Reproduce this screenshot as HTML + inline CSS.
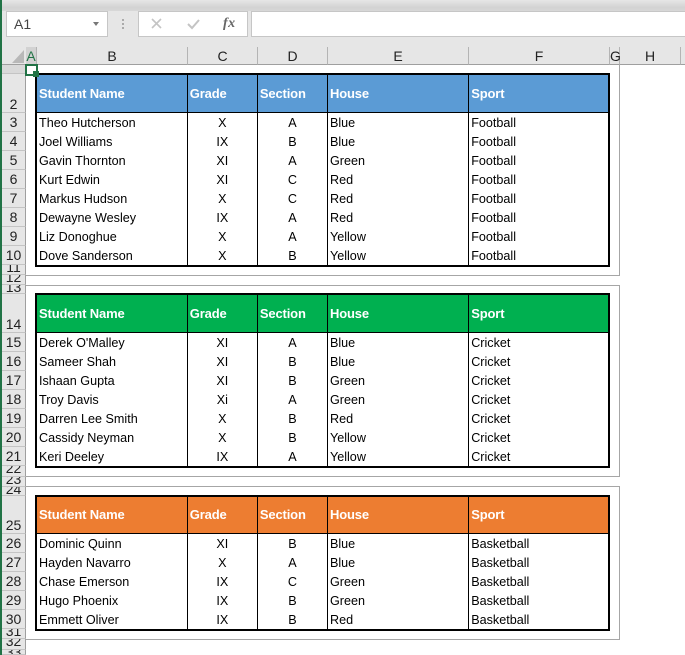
<!DOCTYPE html>
<html><head><meta charset="utf-8">
<style>
html,body{margin:0;padding:0;background:#fff}
#p{position:relative;width:685px;height:655px;overflow:hidden;background:#fff;font-family:"Liberation Sans",sans-serif;font-size:12.6px;color:#000}
.a{position:absolute}
.top{left:0;top:0;width:685px;height:47px;background:#e6e6e6}
.grad{left:0;top:0;width:685px;height:11px;background:linear-gradient(#e6e6e6,#d2d2d2 70%,#d8d8d8)}
.box{background:#fff;border:1px solid #c6c6c6;box-sizing:border-box}
.ch{top:47px;height:18px;background:#e6e6e6;border-bottom:1px solid #9f9f9f;box-sizing:border-box;text-align:center;line-height:19px;font-size:14px;color:#222;border-right:1px solid #b4b4b4}
.rh{left:2px;width:24px;background:#e6e6e6;border-bottom:1px solid #c4c4c4;border-right:1px solid #9f9f9f;box-sizing:border-box;overflow:hidden;text-align:center;font-size:14px;color:#222}
.rh span{position:absolute;left:0;right:0;bottom:-1px;line-height:19px}
.rh.t span{bottom:-2px}
.rh.s span{bottom:auto;top:0;margin-top:-7px}
.g{background:#a6a6a6}
table{position:absolute;left:35px;width:575px;border-collapse:collapse;table-layout:fixed;border:2px solid #000;box-sizing:border-box;background:#fff}
col.b{width:151px}col.c,col.d{width:70px}col.e{width:141px}col.f{width:140px}
th,td{padding:0 0 0 2px;height:19px;line-height:19px;border-left:1px solid #000;white-space:nowrap;overflow:hidden;text-align:left;font-weight:normal;box-sizing:border-box}
td{padding-top:2px;line-height:17px}
th{height:38px;color:#fff;font-weight:bold;font-size:13px;letter-spacing:-.15px;border-bottom:1px solid #000;padding-top:1px}
td.m{text-align:center;padding:2px 0 0}
.bl th{background:#5b9bd5}.gr th{background:#00b050}.or th{background:#ed7d31;height:37px;padding-top:0;padding-bottom:1px}
</style></head><body><div id="p">
<div class="a top"></div><div class="a grad"></div>
<div class="a" style="left:0;top:0;width:2px;height:655px;background:#217346;z-index:9"></div>
<div class="a box" style="left:6px;top:11px;width:102px;height:26px;line-height:24px;padding-left:7px;font-size:14px;color:#444">A1</div>
<div class="a" style="left:93px;top:22px;border-left:3.5px solid transparent;border-right:3.5px solid transparent;border-top:4px solid #777"></div>
<div class="a" style="left:122px;top:19px;width:2px;height:2px;background:#aaa;box-shadow:0 4px #aaa,0 8px #aaa"></div>
<div class="a box" style="left:138px;top:11px;width:110px;height:26px"></div>
<svg class="a" style="left:150px;top:17px" width="20" height="14"><path d="M2 2l9 9M11 2l-9 9" stroke="#c4c4c4" stroke-width="1.6" fill="none"/></svg>
<svg class="a" style="left:186px;top:17px" width="16" height="14"><path d="M2 7l4 4 7-8" stroke="#c4c4c4" stroke-width="2" fill="none"/></svg>
<div class="a" style="left:223px;top:16px;font:italic bold 14px 'Liberation Serif',serif;color:#666;letter-spacing:.5px">fx</div>
<div class="a box" style="left:251px;top:11px;width:440px;height:26px"></div>

<div class="a" style="left:2px;top:47px;width:24px;height:18px;background:#e6e6e6;border-bottom:1px solid #9f9f9f;box-sizing:border-box"></div>
<svg class="a" style="left:11px;top:49px" width="14" height="15"><path d="M13 1v13H1z" fill="#b8b8b8"/></svg>
<div class="a ch" style="left:26px;width:11px;background:#d2d2d2;color:#217346">A</div>
<div class="a ch" style="left:37px;width:151px">B</div>
<div class="a ch" style="left:188px;width:70px">C</div>
<div class="a ch" style="left:258px;width:70px">D</div>
<div class="a ch" style="left:328px;width:141px">E</div>
<div class="a ch" style="left:469px;width:141px">F</div>
<div class="a ch" style="left:610px;width:10px">G</div>
<div class="a ch" style="left:620px;width:61px">H</div>
<div class="a ch" style="left:681px;width:4px;border-right:0"></div>

<div class="a rh" style="top:65px;height:9px;background:#d9d9d9"></div>
<div class="a rh t" style="top:74px;height:39px"><span>2</span></div>
<div class="a rh" style="top:113px;height:19px"><span>3</span></div>
<div class="a rh" style="top:132px;height:19px"><span>4</span></div>
<div class="a rh" style="top:151px;height:19px"><span>5</span></div>
<div class="a rh" style="top:170px;height:19px"><span>6</span></div>
<div class="a rh" style="top:189px;height:19px"><span>7</span></div>
<div class="a rh" style="top:208px;height:19px"><span>8</span></div>
<div class="a rh" style="top:227px;height:19px"><span>9</span></div>
<div class="a rh" style="top:246px;height:19px"><span>10</span></div>
<div class="a rh s" style="top:265px;height:10px"><span>11</span></div>
<div class="a rh s" style="top:275px;height:10px"><span>12</span></div>
<div class="a rh s" style="top:285px;height:9px"><span>13</span></div>
<div class="a rh t" style="top:294px;height:39px"><span>14</span></div>
<div class="a rh" style="top:333px;height:19px"><span>15</span></div>
<div class="a rh" style="top:352px;height:19px"><span>16</span></div>
<div class="a rh" style="top:371px;height:19px"><span>17</span></div>
<div class="a rh" style="top:390px;height:19px"><span>18</span></div>
<div class="a rh" style="top:409px;height:19px"><span>19</span></div>
<div class="a rh" style="top:428px;height:19px"><span>20</span></div>
<div class="a rh" style="top:447px;height:19px"><span>21</span></div>
<div class="a rh s" style="top:466px;height:11px"><span>22</span></div>
<div class="a rh s" style="top:477px;height:10px"><span>23</span></div>
<div class="a rh s" style="top:487px;height:9px"><span>24</span></div>
<div class="a rh t" style="top:496px;height:38px"><span>25</span></div>
<div class="a rh" style="top:534px;height:19px"><span>26</span></div>
<div class="a rh" style="top:553px;height:19px"><span>27</span></div>
<div class="a rh" style="top:572px;height:19px"><span>28</span></div>
<div class="a rh" style="top:591px;height:19px"><span>29</span></div>
<div class="a rh" style="top:610px;height:19px"><span>30</span></div>
<div class="a rh s" style="top:629px;height:10px"><span>31</span></div>
<div class="a rh s" style="top:639px;height:11px"><span>32</span></div>
<div class="a rh s" style="top:650px;height:5px"><span>33</span></div>

<div class="a g" style="left:619px;top:65px;width:1px;height:211px"></div>
<div class="a g" style="left:26px;top:275px;width:594px;height:1px"></div>
<div class="a g" style="left:26px;top:285px;width:594px;height:1px"></div>
<div class="a g" style="left:619px;top:285px;width:1px;height:192px"></div>
<div class="a g" style="left:26px;top:476px;width:594px;height:1px"></div>
<div class="a g" style="left:26px;top:486px;width:594px;height:1px"></div>
<div class="a g" style="left:619px;top:486px;width:1px;height:154px"></div>
<div class="a g" style="left:26px;top:639px;width:594px;height:1px"></div>

<table class="bl" style="top:73px"><colgroup><col class="b"><col class="c"><col class="d"><col class="e"><col class="f"></colgroup>
<tr><th>Student Name</th><th>Grade</th><th>Section</th><th>House</th><th>Sport</th></tr>
<tr><td>Theo Hutcherson</td><td class="m">X</td><td class="m">A</td><td>Blue</td><td>Football</td></tr>
<tr><td>Joel Williams</td><td class="m">IX</td><td class="m">B</td><td>Blue</td><td>Football</td></tr>
<tr><td>Gavin Thornton</td><td class="m">XI</td><td class="m">A</td><td>Green</td><td>Football</td></tr>
<tr><td>Kurt Edwin</td><td class="m">XI</td><td class="m">C</td><td>Red</td><td>Football</td></tr>
<tr><td>Markus Hudson</td><td class="m">X</td><td class="m">C</td><td>Red</td><td>Football</td></tr>
<tr><td>Dewayne Wesley</td><td class="m">IX</td><td class="m">A</td><td>Red</td><td>Football</td></tr>
<tr><td>Liz Donoghue</td><td class="m">X</td><td class="m">A</td><td>Yellow</td><td>Football</td></tr>
<tr><td>Dove Sanderson</td><td class="m">X</td><td class="m">B</td><td>Yellow</td><td>Football</td></tr>
</table>

<table class="gr" style="top:293px"><colgroup><col class="b"><col class="c"><col class="d"><col class="e"><col class="f"></colgroup>
<tr><th>Student Name</th><th>Grade</th><th>Section</th><th>House</th><th>Sport</th></tr>
<tr><td>Derek O'Malley</td><td class="m">XI</td><td class="m">A</td><td>Blue</td><td>Cricket</td></tr>
<tr><td>Sameer Shah</td><td class="m">XI</td><td class="m">B</td><td>Blue</td><td>Cricket</td></tr>
<tr><td>Ishaan Gupta</td><td class="m">XI</td><td class="m">B</td><td>Green</td><td>Cricket</td></tr>
<tr><td>Troy Davis</td><td class="m">Xi</td><td class="m">A</td><td>Green</td><td>Cricket</td></tr>
<tr><td>Darren Lee Smith</td><td class="m">X</td><td class="m">B</td><td>Red</td><td>Cricket</td></tr>
<tr><td>Cassidy Neyman</td><td class="m">X</td><td class="m">B</td><td>Yellow</td><td>Cricket</td></tr>
<tr><td>Keri Deeley</td><td class="m">IX</td><td class="m">A</td><td>Yellow</td><td>Cricket</td></tr>
</table>

<table class="or" style="top:495px"><colgroup><col class="b"><col class="c"><col class="d"><col class="e"><col class="f"></colgroup>
<tr><th>Student Name</th><th>Grade</th><th>Section</th><th>House</th><th>Sport</th></tr>
<tr><td>Dominic Quinn</td><td class="m">XI</td><td class="m">B</td><td>Blue</td><td>Basketball</td></tr>
<tr><td>Hayden Navarro</td><td class="m">X</td><td class="m">A</td><td>Blue</td><td>Basketball</td></tr>
<tr><td>Chase Emerson</td><td class="m">IX</td><td class="m">C</td><td>Green</td><td>Basketball</td></tr>
<tr><td>Hugo Phoenix</td><td class="m">IX</td><td class="m">B</td><td>Green</td><td>Basketball</td></tr>
<tr><td>Emmett Oliver</td><td class="m">IX</td><td class="m">B</td><td>Red</td><td>Basketball</td></tr>
</table>

<div class="a" style="left:25px;top:64px;width:13px;height:12px;border:2px solid #217346;box-sizing:border-box;z-index:5"></div>
<div class="a" style="left:33px;top:71px;width:6px;height:6px;background:#217346;z-index:6"></div>
</div></body></html>
